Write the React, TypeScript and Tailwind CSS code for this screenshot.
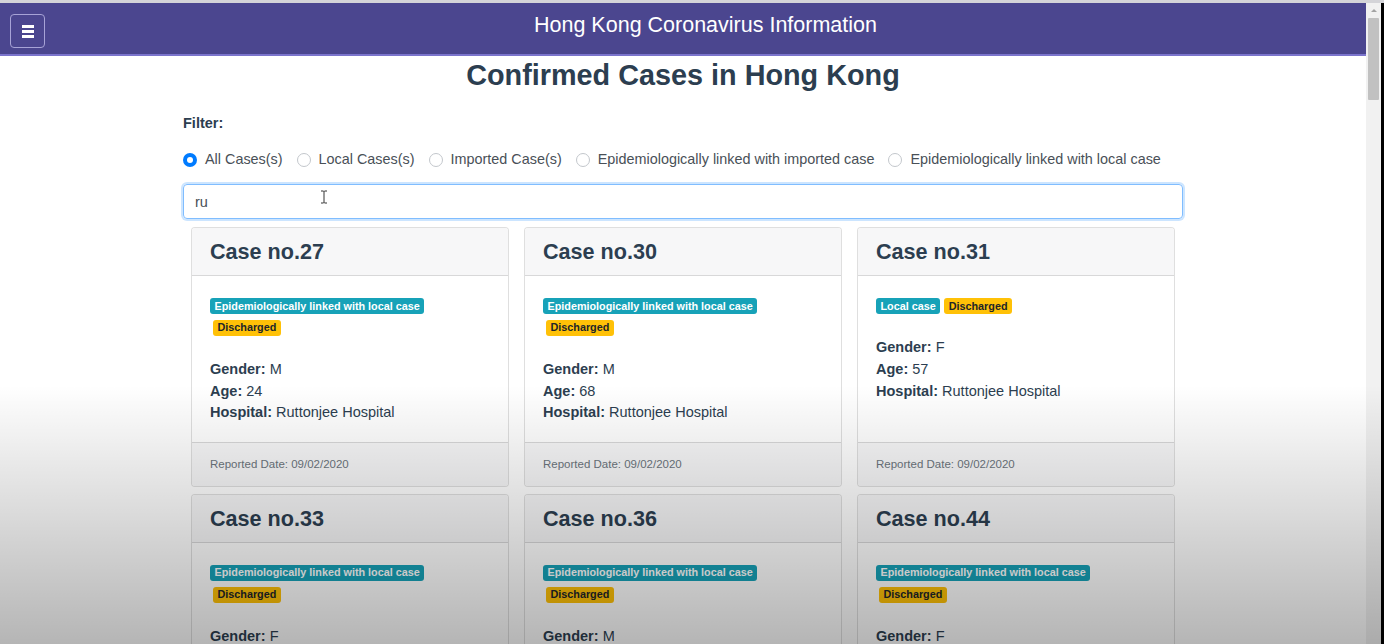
import React from "react";

type CaseItem = {
  id: number;
  type: string;
  status: string;
  gender: string;
  age: number;
  hospital: string;
  date: string;
};

const cases: CaseItem[] = [
  { id: 27, type: "Epidemiologically linked with local case", status: "Discharged", gender: "M", age: 24, hospital: "Ruttonjee Hospital", date: "09/02/2020" },
  { id: 30, type: "Epidemiologically linked with local case", status: "Discharged", gender: "M", age: 68, hospital: "Ruttonjee Hospital", date: "09/02/2020" },
  { id: 31, type: "Local case", status: "Discharged", gender: "F", age: 57, hospital: "Ruttonjee Hospital", date: "09/02/2020" },
  { id: 33, type: "Epidemiologically linked with local case", status: "Discharged", gender: "F", age: 47, hospital: "Ruttonjee Hospital", date: "10/02/2020" },
  { id: 36, type: "Epidemiologically linked with local case", status: "Discharged", gender: "M", age: 62, hospital: "Ruttonjee Hospital", date: "10/02/2020" },
  { id: 44, type: "Epidemiologically linked with local case", status: "Discharged", gender: "F", age: 61, hospital: "Ruttonjee Hospital", date: "12/02/2020" },
];

const filters = [
  "All Cases(s)",
  "Local Cases(s)",
  "Imported Case(s)",
  "Epidemiologically linked with imported case",
  "Epidemiologically linked with local case",
];

function CaseCard({ item }: { item: CaseItem }) {
  return (
    <div className="flex flex-col border border-[rgba(0,0,0,0.125)] rounded-[4px] bg-white overflow-hidden">
      <div className="h-[48px] shrink-0 flex items-center px-[18px] bg-[#f7f7f8] border-b border-[rgba(0,0,0,0.125)]">
        <h3 className="text-[21.6px] font-bold text-[#2c3e50] mt-[1px]">Case no.{item.id}</h3>
      </div>
      <div className="flex-1 px-[18px] pt-[18px] pb-[18px]">
        <div className="leading-[21.75px]">
          <span className="inline-block align-middle mr-[1px] bg-[#17a2b8] text-white text-[10.8px] font-bold leading-none px-[4.5px] py-[2.5px] rounded-[3px]">
            {item.type}
          </span>
          <span className="inline-block align-middle ml-[3px] bg-[#ffc107] text-[#212529] text-[10.8px] font-bold leading-none px-[4.5px] py-[2.5px] rounded-[3px]">
            {item.status}
          </span>
        </div>
        <div className="mt-[21px] text-[14.5px] leading-[21.75px] text-[#2c3e50]">
          <div>
            <b>Gender:</b> {item.gender}
          </div>
          <div>
            <b>Age:</b> {item.age}
          </div>
          <div>
            <b>Hospital:</b> {item.hospital}
          </div>
        </div>
      </div>
      <div className="h-[44px] shrink-0 flex items-center px-[18px] bg-[#f7f7f8] border-t border-[rgba(0,0,0,0.125)]">
        <small className="text-[11.5px] text-[#6c757d] mt-[1px]">Reported Date: {item.date}</small>
      </div>
    </div>
  );
}

function App() {
  return (
    <div className="relative h-[644px] w-[1384px] overflow-hidden bg-white font-['Liberation_Sans',Arial,sans-serif]">
      <div className="h-[3px] bg-[#d4d4d8]"></div>
      <div className="flex h-[641px]">
        <div className="w-[1366px] flex flex-col">
          <header className="h-[53px] shrink-0 flex items-center bg-[#4b468f] border-b-2 border-[#7b74cc]">
            <button className="ml-[10px] mt-[5px] w-[35px] h-[34px] rounded-[4px] border border-[#a7a3d6] flex flex-col items-center justify-center gap-[2px]">
              <span className="block w-[12px] h-[3px] bg-white"></span>
              <span className="block w-[12px] h-[3px] bg-white"></span>
              <span className="block w-[12px] h-[3px] bg-white"></span>
            </button>
            <div className="flex-1 text-center text-white text-[21.5px] -mt-[6px]">
              Hong Kong Coronavirus Information
            </div>
          </header>
          <h1 className="shrink-0 text-center text-[28.8px] font-bold text-[#2c3e50] leading-[34px] mt-[2px]">
            Confirmed Cases in Hong Kong
          </h1>
          <div className="w-[1000px] mx-auto shrink-0">
            <div className="mt-[21px] text-[14.5px] font-bold text-[#2c3e50]">Filter:</div>
            <div className="mt-[14px] flex items-center gap-[14px] text-[14.4px] text-[#495057]">
              {filters.map((f, i) => (
                <label key={f} className="flex items-center gap-[8px]">
                  {i === 0 ? (
                    <span className="w-[14px] h-[14px] rounded-full bg-[#007bff] flex items-center justify-center">
                      <span className="w-[6px] h-[6px] rounded-full bg-white"></span>
                    </span>
                  ) : (
                    <span className="w-[14px] h-[14px] rounded-full border border-[#c3c7cc] bg-white"></span>
                  )}
                  <span>{f}</span>
                </label>
              ))}
            </div>
            <div className="relative mt-[14px]">
              <input
                value="ru"
                readOnly
                className="w-full h-[35px] px-[11px] text-[14.5px] text-[#495057] rounded-[4px] border border-[#80bdff] shadow-[0_0_0_2px_rgba(0,123,255,0.2)] outline-none"
              />
              <svg className="absolute left-[136px] top-[6px]" width="10" height="14" viewBox="0 0 10 14">
                <path d="M2 1h2.5L5 1.6 5.5 1H8M5 1.6v10.8M2 13h2.5l.5-.6.5.6H8" stroke="#333" strokeWidth="1" fill="none" />
              </svg>
            </div>
            <div className="mt-[8px] px-[8px] grid grid-cols-3 gap-x-[15px] gap-y-[7px]">
              {cases.map((c) => (
                <CaseCard key={c.id} item={c} />
              ))}
            </div>
          </div>
        </div>
        <div className="w-[15px] bg-[#f1f1f1] flex flex-col items-center">
          <div className="h-[15px] flex items-center justify-center">
            <div className="w-0 h-0 border-l-[3px] border-r-[3px] border-b-[3px] border-l-transparent border-r-transparent border-b-[#a3a3a3]"></div>
          </div>
          <div className="w-[11px] h-[82px] bg-[#c1c1c1] rounded-[1px]"></div>
        </div>
        <div className="w-[3px] bg-black"></div>
      </div>
      <div className="pointer-events-none absolute left-0 right-0 top-[385px] bottom-0 bg-linear-to-b from-transparent to-[rgba(0,0,0,0.29)]"></div>
    </div>
  );
}

export default App;
